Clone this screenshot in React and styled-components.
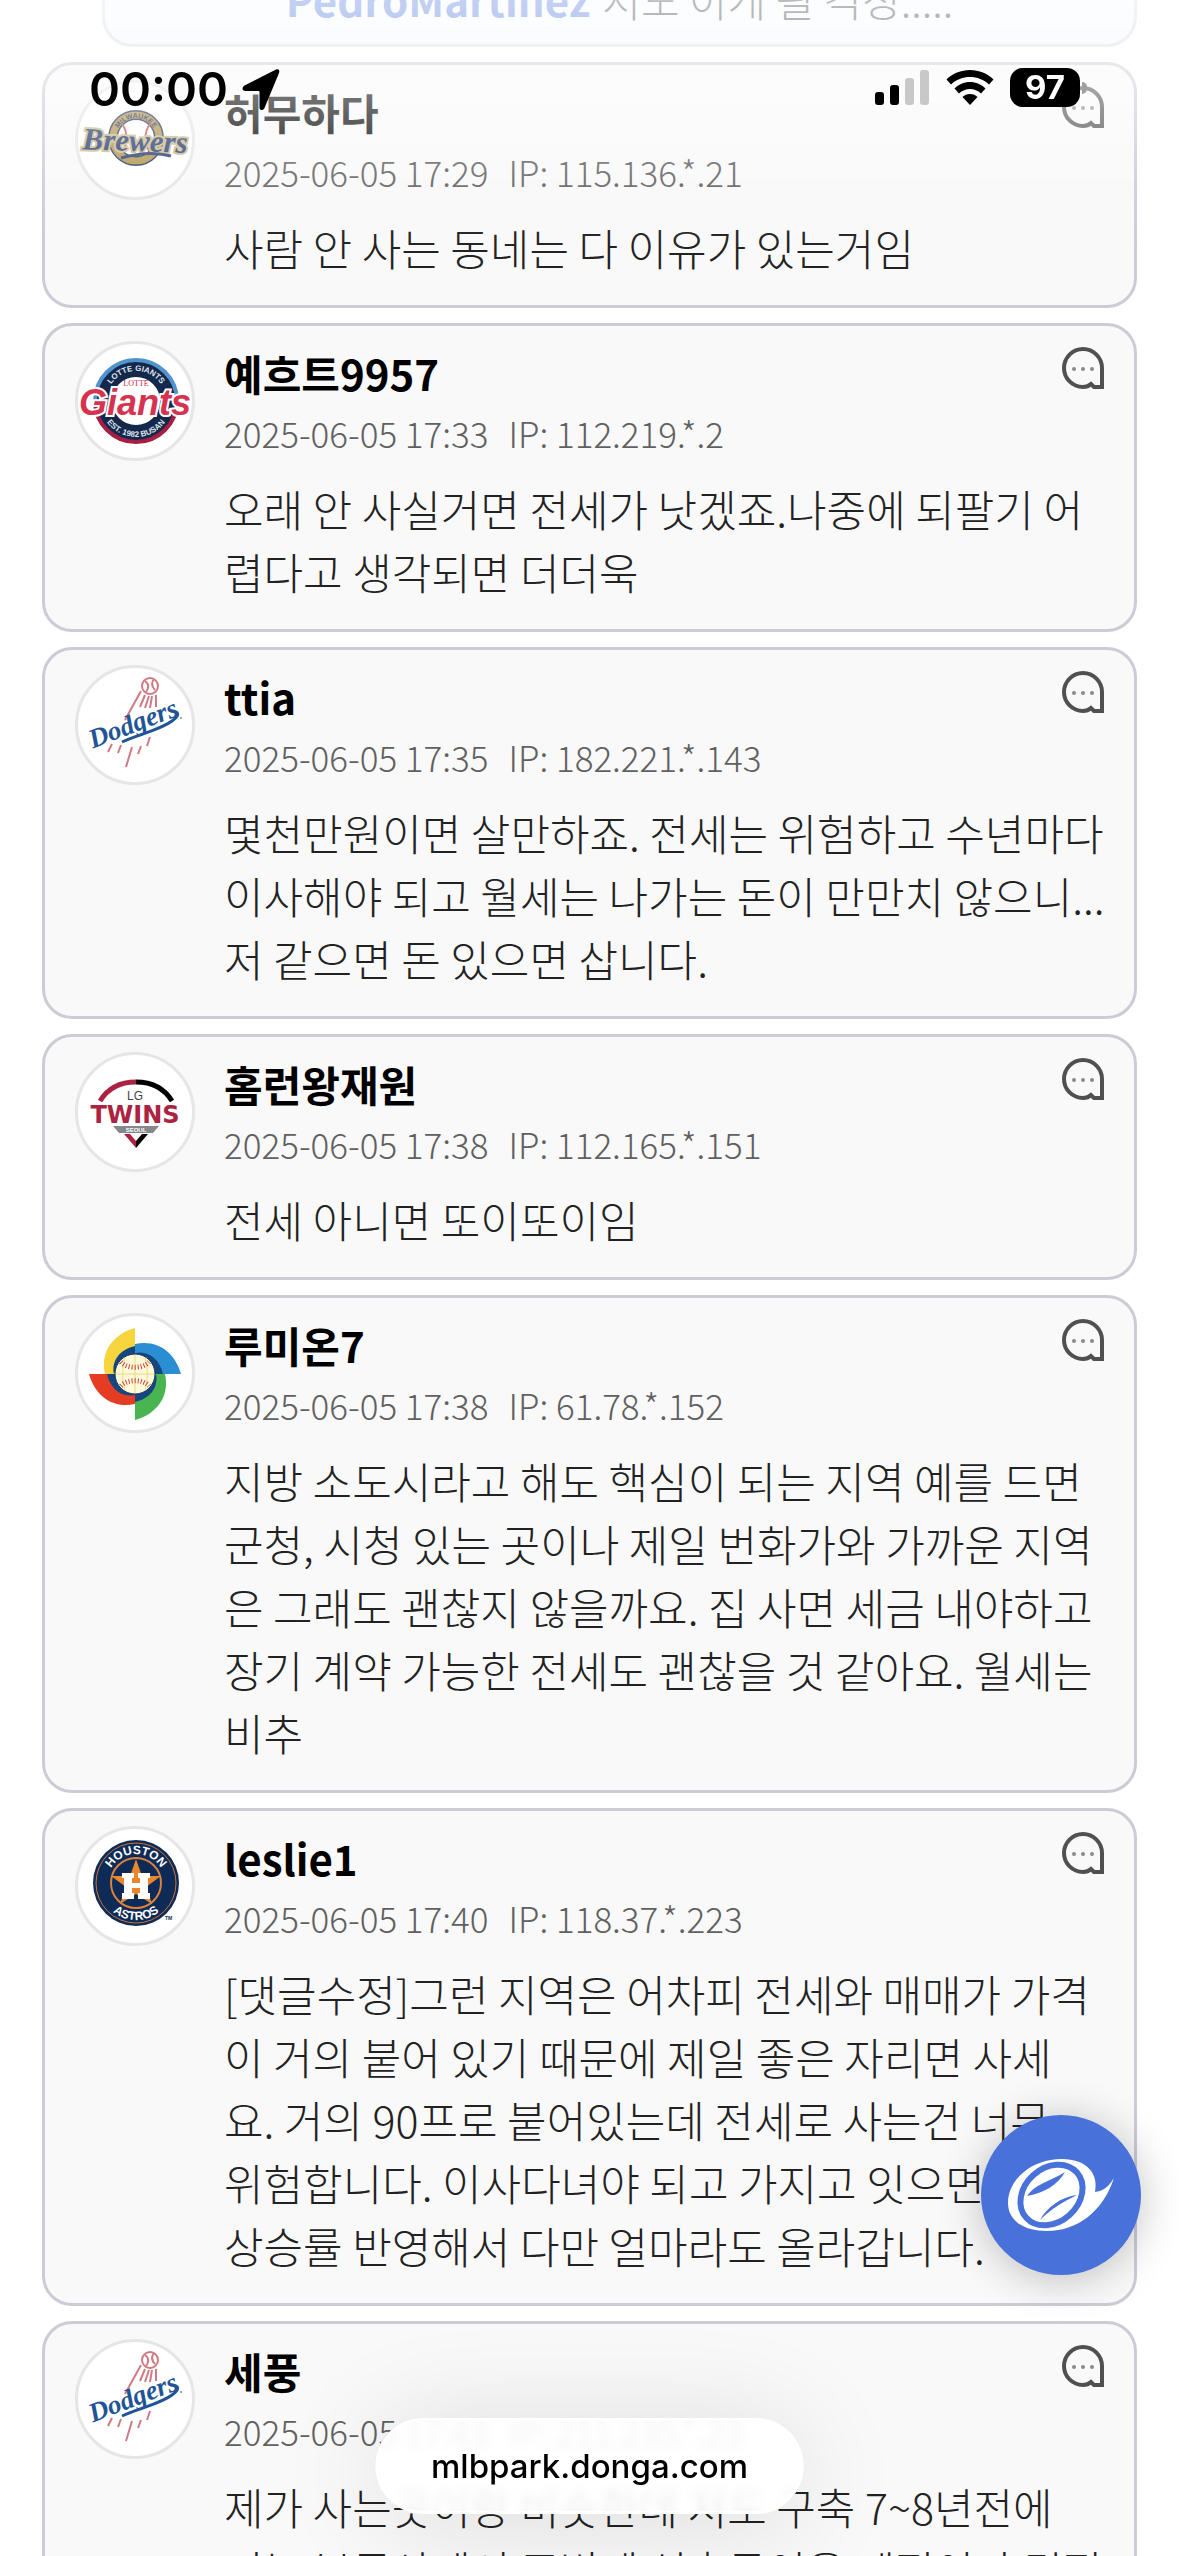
import React from "react";
import styled, { createGlobalStyle } from "styled-components";

const GlobalStyle = createGlobalStyle`
  * {
    box-sizing: border-box;
  }
  body {
    margin: 0;
    background: #fff;
    font-family: "Noto Sans CJK KR", "Noto Sans", sans-serif;
  }
  button {
    padding: 0;
    border: 0;
    background: none;
    cursor: pointer;
  }
`;

const Page = styled.main`
  position: relative;
  height: 100vh;
  overflow: hidden;
  padding: 0 42px;
`;

const QuotedReply = styled.div`
  display: flex;
  align-items: flex-end;
  justify-content: center;
  height: 47px;
  margin: 0 0 15px 60px;
  padding-bottom: 15px;
  border: 3px solid #dcdce0;
  border-top: 0;
  border-radius: 0 0 30px 30px;
  background: #f4f8ff;
  overflow: hidden;
  line-height: 60px;
  font-size: 42px;
  font-weight: 300;
  color: #333;
  white-space: nowrap;
  strong {
    margin-right: 12px;
    font-weight: 700;
    color: #4770db;
  }
`;

const CommentList = styled.ul`
  display: flex;
  flex-direction: column;
  gap: 15px;
  margin: 0;
  padding: 0;
  list-style: none;
`;

const Card = styled.li`
  display: flex;
  align-items: flex-start;
  position: relative;
  padding: 15px 24px 26px 30px;
  border: 3px solid #cdccd6;
  border-radius: 30px;
  background: #f9f9f9;
`;

const Avatar = styled.span`
  flex: none;
  width: 120px;
  height: 120px;
  margin-right: 29px;
  border: 3px solid #e6e6e6;
  border-radius: 50%;
  background: #fff;
  overflow: hidden;
  svg {
    display: block;
    margin: -3px;
  }
`;

const Content = styled.div`
  flex: 1;
  min-width: 0;
  padding-top: 1px;
`;

const Name = styled.h2`
  margin: 0;
  line-height: 62px;
  font-size: 42px;
  font-weight: 700;
  color: #000;
`;

const Meta = styled.div`
  display: flex;
  gap: 20px;
  line-height: 58px;
  font-size: 35px;
  font-weight: 300;
  color: #606060;
  white-space: nowrap;
`;

const Message = styled.p`
  margin: 15px 0 0;
  line-height: 63px;
  font-size: 43px;
  font-weight: 300;
  color: #222;
  white-space: pre;
`;

const ReplyButton = styled.button`
  position: absolute;
  top: 21px;
  right: 30px;
  width: 42px;
  height: 43px;
  svg {
    display: block;
  }
`;

const StatusBar = styled.header`
  position: fixed;
  top: 0;
  left: 0;
  right: 0;
  display: flex;
  align-items: flex-start;
  justify-content: space-between;
  height: 250px;
  padding: 68px 99px 0 89px;
  background: linear-gradient(
    rgba(255, 255, 255, 0.68) 0,
    rgba(255, 255, 255, 0.55) 70px,
    rgba(255, 255, 255, 0.33) 130px,
    rgba(255, 255, 255, 0.14) 180px,
    rgba(255, 255, 255, 0) 250px
  );
  pointer-events: none;
`;

const Clock = styled.div`
  display: flex;
  align-items: center;
  gap: 14px;
  line-height: 40px;
  font-family: Inter, sans-serif;
  font-size: 47px;
  font-weight: 600;
  color: #000;
`;

const Indicators = styled.div`
  display: flex;
  align-items: center;
  gap: 16px;
`;

const Battery = styled.span`
  position: relative;
  width: 70px;
  height: 39px;
  border-radius: 13px;
  background: #000;
  color: #fff;
  text-align: center;
  line-height: 39px;
  font-family: Inter, sans-serif;
  font-size: 33px;
  font-weight: 700;
  &::after {
    content: "";
    position: absolute;
    top: 14px;
    right: -7px;
    width: 5px;
    height: 12px;
    border-radius: 0 5px 5px 0;
    background: #a0a0a0;
  }
`;

const AddressPill = styled.button`
  position: fixed;
  bottom: 42px;
  left: 50%;
  transform: translateX(-50%);
  height: 96px;
  padding: 0 53px;
  border: 3px solid #fff;
  border-radius: 48px;
  background: rgba(255, 255, 255, 0.9);
  backdrop-filter: blur(4px);
  box-shadow: 0 8px 110px rgba(0, 0, 0, 0.12);
  font-family: Inter, sans-serif;
  font-size: 33px;
  font-weight: 500;
  color: #000;
`;

const FloatingButton = styled.button`
  position: fixed;
  right: 38px;
  bottom: 281px;
  width: 160px;
  height: 160px;
  border-radius: 50%;
  background: #4871da;
  box-shadow: 0 4px 44px rgba(0, 0, 0, 0.24);
  svg {
    display: block;
  }
`;

const BrewersLogo = () => (
  <svg width="120" height="120" viewBox="0 0 120 120">
    <circle cx="61" cy="58" r="23" fill="#fff" stroke="#23345f" strokeWidth="10" />
    <circle cx="61" cy="58" r="23" fill="none" stroke="#b0944d" strokeWidth="7" />
    <path d="M47 44c6 8 6 20 0 28M75 44c-6 8-6 20 0 28" fill="none" stroke="#c5525c" strokeWidth="2" />
    <path id="brewersArc" d="M41 58a20 20 0 0 1 40 0" fill="none" />
    <text fontFamily="Liberation Sans" fontWeight="700" fontSize="7" fill="#23345f">
      <textPath href="#brewersArc" startOffset="50%" textAnchor="middle">MILWAUKEE</textPath>
    </text>
    <text
      x="60" y="71" textAnchor="middle" transform="rotate(2 60 66)"
      fontFamily="Liberation Serif" fontStyle="italic" fontWeight="700" fontSize="31"
      fill="#263a70" stroke="#c9b98a" strokeWidth="4" paintOrder="stroke"
    >
      Brewers
    </text>
    <path d="M46 78c18-5 36-6 50-2" fill="none" stroke="#263a70" strokeWidth="3" />
    <circle cx="91" cy="71" r="1" fill="#263a70" />
  </svg>
);

const GiantsLogo = () => (
  <svg width="120" height="120" viewBox="0 0 120 120">
    <circle cx="61" cy="60" r="33" fill="#fff" stroke="#14284b" strokeWidth="18" />
    <path d="M20 60a41 41 0 0 1 82 0" fill="none" stroke="#4f93cf" strokeWidth="4" />
    <path d="M20 60a41 41 0 0 0 82 0" fill="none" stroke="#a51f43" strokeWidth="4" />
    <path id="giantsTop" d="M31 60a30 30 0 0 1 60 0" fill="none" />
    <path id="giantsBottom" d="M25 60a36 36 0 0 0 72 0" fill="none" />
    <text fontFamily="Liberation Sans" fontWeight="700" fontSize="8" fill="#dfe6f0">
      <textPath href="#giantsTop" startOffset="50%" textAnchor="middle">LOTTE GIANTS</textPath>
    </text>
    <text fontFamily="Liberation Sans" fontWeight="700" fontSize="8" fill="#dfe6f0">
      <textPath href="#giantsBottom" startOffset="50%" textAnchor="middle">EST. 1982 BUSAN</textPath>
    </text>
    <text x="61" y="45" textAnchor="middle" fontFamily="Liberation Serif" fontSize="8" fill="#c6283f">LOTTE</text>
    <text
      x="60" y="74" textAnchor="middle"
      fontFamily="Liberation Sans" fontStyle="italic" fontWeight="700" fontSize="36"
      fill="#d5334f" stroke="#fff" strokeWidth="4" paintOrder="stroke"
    >
      Giants
    </text>
  </svg>
);

const DodgersLogo = () => (
  <svg width="120" height="120" viewBox="0 0 120 120">
    <g fill="none" stroke="#cf7b83" strokeWidth="2">
      <circle cx="75" cy="21" r="8" />
      <path d="M70 16c4 3 4 7 1 11M79 14c-3 4-2 8 1 11M66 26L50 55M70 30l-5 12M74 31l-4 12M77 31l-2 12M81 30v12M37 79l-4 8M46 80l-3 8M57 82l-6 20M66 81l-3 8M75 72l-3 9" />
    </g>
    <text
      x="60" y="67" textAnchor="middle" transform="rotate(-21 60 64)"
      fontFamily="Liberation Serif" fontStyle="italic" fontWeight="700" fontSize="27" fill="#1f5596"
    >
      Dodgers
    </text>
    <path d="M47 77c20-9 38-12 50-21 7-5 7-9 3-9" fill="none" stroke="#1f5596" strokeWidth="3" />
    <path d="M105 53h2" stroke="#1f5596" strokeWidth="1" />
  </svg>
);

const TwinsLogo = () => (
  <svg width="120" height="120" viewBox="0 0 120 120">
    <path d="M25 49C33 36 46 30 61 30" fill="none" stroke="#ab2341" strokeWidth="5" />
    <path d="M61 30c15 0 28 6 36 19" fill="none" stroke="#000" strokeWidth="5" />
    <text x="60" y="48" textAnchor="middle" fontFamily="Liberation Sans" fontSize="12" fill="#444">LG</text>
    <text
      x="60" y="71" textAnchor="middle"
      fontFamily="DejaVu Sans" fontWeight="700" fontSize="24" fill="#ab2341"
    >
      TWINS
    </text>
    <path d="M38 74h46l-6 7H44z" fill="#85878a" />
    <text x="61" y="80" textAnchor="middle" fontFamily="Liberation Sans" fontWeight="700" fontSize="6" fill="#fff">SEOUL</text>
    <path d="M49 82h6l6 7v7z" fill="#ab2341" />
    <path d="M73 82h-6l-6 7v7z" fill="#000" />
  </svg>
);

const ClassicLogo = () => (
  <svg width="120" height="120" viewBox="0 0 120 120">
    <g transform="translate(60 61)">
      {["#e53c24", "#f6d53f", "#2c8ed2", "#49b550"].map((color, i) => (
        <path key={color} transform={`rotate(${i * 90})`} d="M-46 0H-16V12L0 16V30C-22 35 -40 22 -46 0Z" fill={color} />
      ))}
      {[0, 90, 180, 270].map((angle) => (
        <path key={angle} transform={`rotate(${angle})`} d="M-28 0H-18L-7 18L0 21C-14 24 -25 14 -28 0Z" fill="#15467f" />
      ))}
      <circle r="20" fill="#fff9dc" stroke="#17375f" strokeWidth="1" />
      <path d="M-19 0H19M0-19V19M-10-16C-13-6-13 6-10 16M10-16C13-6 13 6 10 16" fill="none" stroke="#e5dc7c" strokeWidth="1" />
      <path d="M-14-12C-8-5 8-5 14-12M-14 12C-8 5 8 5 14 12" fill="none" stroke="#c8453e" strokeWidth="5" strokeDasharray="1 2" />
    </g>
  </svg>
);

const AstrosLogo = () => (
  <svg width="120" height="120" viewBox="0 0 120 120">
    <circle cx="61" cy="57" r="43" fill="#0d2b56" />
    <circle cx="61" cy="57" r="40" fill="none" stroke="#c8743a" strokeWidth="1" />
    <circle cx="61" cy="57" r="25" fill="none" stroke="#d9813d" strokeWidth="2" />
    <path d="M61 33l6 17h19L71 61l6 17-16-10-16 10 6-17L36 50h19z" fill="#e8862f" />
    <path d="M47 47h12v5h-2v5h8v-5h-2v-5h12v5h-2v15h2v6H63v-6h2v-5h-8v5h2v6H47v-6h2V52h-2z" fill="#fff" />
    <path id="astrosTop" d="M32 57a29 29 0 0 1 58 0" fill="none" />
    <path id="astrosBottom" d="M24 57a37 37 0 0 0 74 0" fill="none" />
    <text fontFamily="Liberation Sans" fontWeight="700" fontSize="12" fill="#fff">
      <textPath href="#astrosTop" startOffset="50%" textAnchor="middle">HOUSTON</textPath>
    </text>
    <text fontFamily="Liberation Sans" fontWeight="700" fontSize="12" fill="#fff">
      <textPath href="#astrosBottom" startOffset="50%" textAnchor="middle">ASTROS</textPath>
    </text>
    <text x="90" y="94" fontFamily="Liberation Sans" fontWeight="700" fontSize="5" fill="#0d2b56">TM</text>
  </svg>
);

const logos = {
  brewers: BrewersLogo,
  giants: GiantsLogo,
  dodgers: DodgersLogo,
  twins: TwinsLogo,
  classic: ClassicLogo,
  astros: AstrosLogo,
};

const comments = [
  {
    team: "brewers",
    name: "허무하다",
    date: "2025-06-05 17:29",
    ip: "115.136.*.21",
    message: "사람 안 사는 동네는 다 이유가 있는거임",
  },
  {
    team: "giants",
    name: "예흐트9957",
    date: "2025-06-05 17:33",
    ip: "112.219.*.2",
    message: "오래 안 사실거면 전세가 낫겠죠.나중에 되팔기 어\n렵다고 생각되면 더더욱",
  },
  {
    team: "dodgers",
    name: "ttia",
    date: "2025-06-05 17:35",
    ip: "182.221.*.143",
    message: "몇천만원이면 살만하죠. 전세는 위험하고 수년마다\n이사해야 되고 월세는 나가는 돈이 만만치 않으니...\n저 같으면 돈 있으면 삽니다.",
  },
  {
    team: "twins",
    name: "홈런왕재원",
    date: "2025-06-05 17:38",
    ip: "112.165.*.151",
    message: "전세 아니면 또이또이임",
  },
  {
    team: "classic",
    name: "루미온7",
    date: "2025-06-05 17:38",
    ip: "61.78.*.152",
    message: "지방 소도시라고 해도 핵심이 되는 지역 예를 드면\n군청, 시청 있는 곳이나 제일 번화가와 가까운 지역\n은 그래도 괜찮지 않을까요. 집 사면 세금 내야하고\n장기 계약 가능한 전세도 괜찮을 것 같아요. 월세는\n비추",
  },
  {
    team: "astros",
    name: "leslie1",
    date: "2025-06-05 17:40",
    ip: "118.37.*.223",
    message: "[댓글수정]그런 지역은 어차피 전세와 매매가 가격\n이 거의 붙어 있기 때문에 제일 좋은 자리면 사세\n요. 거의 90프로 붙어있는데 전세로 사는건 너무\n위험합니다. 이사다녀야 되고 가지고 잇으면\n상승률 반영해서 다만 얼마라도 올라갑니다.",
  },
  {
    team: "dodgers",
    name: "세풍",
    date: "2025-06-05 17:43",
    ip: "211.235.*.23",
    message: "제가 사는곳이랑 비슷한데 저도 구축 7~8년전에\n저는 부동산에서 주변에 신축들이올 예정이라 걱정",
  },
];

const Comment = ({ team, name, date, ip, message }) => {
  const Logo = logos[team];
  return (
    <Card>
      <Avatar><Logo /></Avatar>
      <Content>
        <Name>{name}</Name>
        <Meta>
          <span>{date}</span>
          <span>IP: {ip}</span>
        </Meta>
        <Message>{message}</Message>
      </Content>
      <ReplyButton aria-label="답글">
        <svg width="42" height="43" viewBox="0 0 42 43">
          <path d="M40 21A19 19 0 1 0 21 40C24 40 27 39 29 37L32 40H40Z" fill="none" stroke="#505050" strokeWidth="4" />
          <g fill="#8a8a8a">
            <circle cx="12" cy="22" r="2" />
            <circle cx="21" cy="22" r="2" />
            <circle cx="30" cy="22" r="2" />
          </g>
        </svg>
      </ReplyButton>
    </Card>
  );
};

const App = () => {
  return (
    <>
      <GlobalStyle />
      <Page>
        <QuotedReply>
          <strong>PedroMartinez</strong>
          <span>저도 이게 될 걱정.....</span>
        </QuotedReply>
        <CommentList>
          {comments.map((comment) => (
            <Comment key={comment.name} {...comment} />
          ))}
        </CommentList>
      </Page>
      <StatusBar>
        <Clock>
          00:00
          <svg width="38" height="42" viewBox="0 0 38 42">
            <path d="M34 1.500L2.500 17.500C-.5 19.500 0 23 3.500 23H16.500C17 23 17.500 23.500 17.500 24V39C17.500 43 21 43 22.500 40L37 5C38 2 36.500 .5 34 1.500Z" fill="#000" />
          </svg>
        </Clock>
        <Indicators>
          <svg width="55" height="35" viewBox="0 0 55 35">
            <rect x="0" y="22" width="9" height="13" rx="3" fill="#000" />
            <rect x="15" y="15" width="9" height="20" rx="3" fill="#000" />
            <rect x="30" y="8" width="9" height="27" rx="3" fill="#c8c8c8" />
            <rect x="45" y="0" width="9" height="35" rx="3" fill="#c8c8c8" />
          </svg>
          <svg width="48" height="35" viewBox="0 0 48 35">
            <path d="M24 0C33 0 41.500 3.500 47.500 9.500L43 14.500C38 9.500 31 7 24 7S10 9.500 5 14.500L.5 9.500C6.500 3.500 15 0 24 0Z" fill="#000" />
            <path d="M24 12C30 12 35.500 14.500 39.500 18.500L35 23.500C32 20.500 28 19 24 19S16 20.500 13 23.500L8.500 18.500C12.500 14.500 18 12 24 12Z" fill="#000" />
            <path d="M24 24C27 24 29.500 25 31.500 27L24 35L16.500 27C18.500 25 21 24 24 24Z" fill="#000" />
          </svg>
          <Battery>97</Battery>
        </Indicators>
      </StatusBar>
      <FloatingButton aria-label="메뉴">
        <svg width="160" height="160" viewBox="0 0 160 160">
          <path d="M133 63C126 74 121 76 114 77C118 58 105 44 81 44C50 44 27 65 27 88C27 105 42 116 66 116C97 116 122 96 133 63Z" fill="#fff" />
          <ellipse cx="70.500" cy="80" rx="34" ry="27" transform="rotate(-42 70.500 80)" fill="#fff" stroke="#4871da" strokeWidth="6" />
          <path d="M46 81C54 69 68 67 84 57C76 71 62 78 46 81ZM59 105C66 92 80 82 96 80C82 87 70 94 59 105Z" fill="#4871da" />
        </svg>
      </FloatingButton>
      <AddressPill>mlbpark.donga.com</AddressPill>
    </>
  );
};

export default App;
